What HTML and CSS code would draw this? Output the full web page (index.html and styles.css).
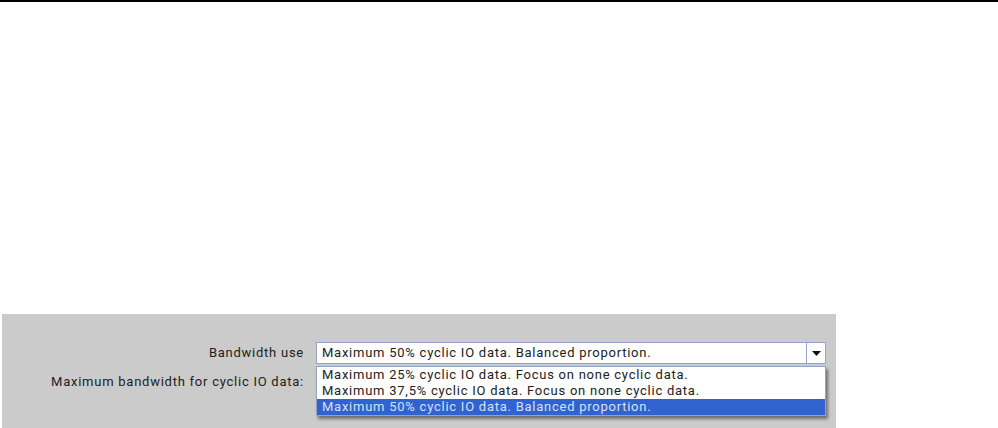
FILE: index.html
```html
<!DOCTYPE html>
<html>
<head>
<meta charset="utf-8">
<link rel="stylesheet" href="styles.css">
</head>
<body>
<div class="topline"></div>
<div class="panel">
  <div class="form">
    <div class="label">Bandwidth use</div>
    <div class="combo-wrap">
      <div class="combo">
        <div class="combo-value">Maximum 50% cyclic IO data. Balanced proportion.</div>
        <div class="combo-btn">
          <svg width="9" height="5" viewBox="0 0 9 5"><path d="M0 0H9L4.5 5Z" fill="#111"/></svg>
        </div>
      </div>
      <ul class="list">
        <li>Maximum 25% cyclic IO data. Focus on none cyclic data.</li>
        <li>Maximum 37,5% cyclic IO data. Focus on none cyclic data.</li>
        <li class="selected">Maximum 50% cyclic IO data. Balanced proportion.</li>
      </ul>
    </div>
    <div class="label label2">Maximum bandwidth for cyclic IO data:</div>
    <div></div>
  </div>
</div>
</body>
</html>
```
FILE: styles.css
```css
html, body {
  margin: 0;
  padding: 0;
  background: #fff;
  height: 428px;
  overflow: hidden;
  font-family: Roboto, "Open Sans", sans-serif;
  font-size: 13px;
  letter-spacing: 0.75px;
  color: #222;
}
.topline {
  height: 2px;
  background: #000;
}
.panel {
  margin: 312px 0 0 2px;
  width: 834px;
  height: 114px;
  background: #cbcbcb;
}
.form {
  display: grid;
  grid-template-columns: 302px 510px;
  column-gap: 12px;
  row-gap: 0;
  padding-top: 28px;
}
.label {
  text-align: right;
  height: 22px;
  line-height: 21px;
}
.label2 {
  margin-top: 7px;
}
.combo-wrap {
  position: relative;
  height: 22px;
}
.combo {
  display: flex;
  height: 20px;
  border: 1px solid #95a2c8;
  background: #fff;
}
.combo-value {
  flex: 1;
  padding-left: 5px;
  line-height: 19px;
}
.combo-btn {
  width: 18px;
  border-left: 1px solid #95a2c8;
  display: flex;
  align-items: center;
  justify-content: center;
}
.list {
  position: absolute;
  left: 0;
  top: 24px;
  width: 508px;
  margin: 0;
  padding: 0;
  list-style: none;
  background: #fff;
  border: 1px solid #95a2c8;
  box-shadow: 2px 3px 3px rgba(0,0,0,0.45);
}
.list li {
  height: 16px;
  line-height: 16px;
  padding-left: 5px;
}
.list li.selected {
  background: #3163d0;
  color: #d6e0f6;
}
```
